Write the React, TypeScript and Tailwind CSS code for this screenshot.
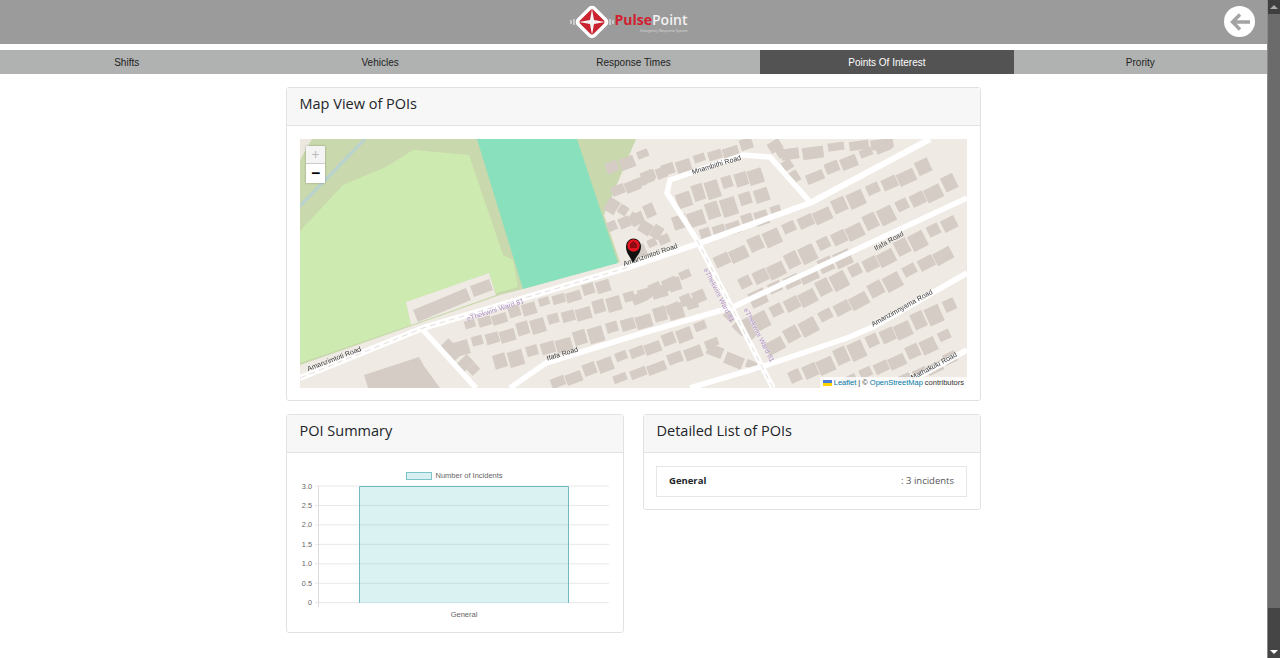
const tabs = ["Shifts", "Vehicles", "Response Times", "Points Of Interest", "Prority"];

// [x1, y1, x2, y2, count, depth] rows of houses, in page coordinates
const houseRows: number[][] = [
  [470, 326, 618, 281, 10, 10], [462, 347, 690, 281, 15, 12], [500, 362, 708, 301, 13, 13],
  [448, 345, 482, 380, 4, 13], [558, 382, 716, 322, 10, 11], [620, 380, 730, 338, 6, 10],
  [612, 205, 668, 240, 5, 12], [612, 168, 658, 150, 3, 10], [640, 180, 672, 168, 3, 9],
  [618, 190, 662, 172, 3, 11], [612, 228, 662, 206, 4, 12], [640, 250, 676, 234, 3, 10],
  [668, 170, 762, 140, 6, 10], [684, 198, 770, 170, 6, 15], [680, 222, 778, 190, 6, 15], [705, 235, 790, 208, 6, 12],
  [775, 145, 800, 185, 4, 11], [790, 155, 905, 139, 5, 10], [815, 175, 900, 141, 5, 10],
  [722, 260, 940, 160, 13, 13], [745, 284, 965, 176, 14, 14], [758, 297, 860, 250, 6, 13],
  [745, 328, 965, 216, 14, 14], [775, 344, 960, 245, 11, 13], [730, 316, 760, 345, 3, 10],
  [795, 378, 965, 300, 11, 15], [850, 382, 960, 330, 7, 12], [715, 352, 772, 375, 3, 10],
  [640, 296, 700, 270, 4, 10], [660, 312, 712, 290, 4, 10], [905, 380, 965, 352, 4, 10],
];

const roads = [
  "M300 378L423 328L629 267L700 243L810 203L930 139",
  "M697 240L667 193L670 180L743 155L770 157L810 202",
  "M697 240L773 388",
  "M967 198L733 307L646 332L546 363L510 388",
  "M967 273L873 327L847 338L767 365L690 388",
  "M967 350L907 383L895 388",
  "M423 330L476 388",
];

const labels: [string, number, number, number, string][] = [
  ["Amanzimtoti Road", 335, 361, -21, "#333"], ["Amanzimtoti Road", 651, 257, -19, "#333"],
  ["Mnambithi Road", 717, 167, -17, "#333"], ["Ifafa Road", 890, 243, -29, "#333"],
  ["Ifafa Road", 563, 356, -17, "#333"], ["Amanzimnyama Road", 903, 310, -29, "#333"],
  ["Mathakulu Road", 935, 368, -28, "#333"], ["eThekwini Ward 81", 496, 312, -18, "#a98bbf"],
  ["eThekwini Ward 81", 717, 296, 63, "#a98bbf"], ["eThekwini Ward 81", 757, 336, 63, "#a98bbf"],
];

function Houses() {
  const out: React.ReactElement[] = [];
  houseRows.forEach((r, ri) => {
    const [x1, y1, x2, y2, n, d] = r;
    const angle = (Math.atan2(y2 - y1, x2 - x1) * 180) / Math.PI;
    const step = Math.hypot(x2 - x1, y2 - y1) / n;
    for (let i = 0; i < n; i++) {
      const t = i / n;
      const seed = (i * 7 + ri * 13) % 5;
      const w = step * (0.7 + seed * 0.07);
      const h = d * (0.8 + ((seed * 3) % 5) * 0.1);
      const cx = x1 + (x2 - x1) * t;
      const cy = y1 + (y2 - y1) * t + (seed - 2);
      out.push(
        <rect key={`${ri}-${i}`} x={-w / 2} y={-h / 2} width={w} height={h} fill="#d5ccc5" transform={`translate(${cx} ${cy}) rotate(${angle})`} />
      );
    }
  });
  return <g>{out}</g>;
}

function MapDrawing() {
  return (
    <svg viewBox="300 139 667 249" className="block h-full w-full blur-[0.4px]">
      <rect x="300" y="139" width="667" height="249" fill="#efebe4" />
      <path d="M300 139H636L604 215L620 262L523 289L500 295L300 365Z" fill="#c9d8ad" />
      <path d="M300 139H312L300 160Z" fill="#ece8e0" />
      <path d="M300 206L365 139" stroke="#b8d2cf" strokeWidth="3" fill="none" />
      <path d="M299 232L343 185L386 167L413 150L469 155L503 255L513 260L518 287L496 293L489 273L406 302L411 325L300 363Z" fill="#cdebb0" />
      <path d="M489 273L406 302L411 325L496 295Z" fill="#efebe4" />
      <path d="M477 139H577L618 263L523 289Z" fill="#88e0bc" />
      <Houses />
      <path d="M413 310L466 288L471 300L418 322Z" fill="#d5ccc5" />
      <path d="M470 286L489 279L493 290L474 297Z" fill="#d5ccc5" />
      <path d="M364 375L419 357L424 366L440 388H368Z" fill="#d5ccc5" />
      {roads.map((d, i) => (
        <path key={i} d={d} fill="none" stroke="#ffffff" strokeWidth={i === 0 ? 6 : 5.5} strokeLinejoin="round" />
      ))}
      <path d={roads[0].split("L").slice(0, 3).join("L")} fill="none" stroke="#e3dfdc" strokeWidth="1" strokeDasharray="6 4" />
      <path d="M697 240L773 388" fill="none" stroke="#e3dfdc" strokeWidth="1" strokeDasharray="6 4" />
      {labels.map(([t, x, y, r, c], i) => (
        <text key={i} x={x} y={y} transform={`rotate(${r} ${x} ${y})`} textAnchor="middle" fontSize="7" fill={c} stroke="#fff" strokeWidth="0.3" paintOrder="stroke" fontFamily="'Liberation Sans', sans-serif">
          {t}
        </text>
      ))}
      <path d="M633 263C630 256 626 254 626 246A7.5 7.5 0 0 1 641 246C641 254 636 256 633 263Z" fill="#111" />
      <circle cx="633.5" cy="245.5" r="6.2" fill="#e3141f" />
      <path d="M630 248V244L633.5 241L637 244V248Z" fill="#8c0a12" />
    </svg>
  );
}

function Chart() {
  const ticks = ["3.0", "2.5", "2.0", "1.5", "1.0", "0.5", "0"];
  return (
    <svg viewBox="287 453 336 179" className="block h-[179px] w-full" fontFamily="'Liberation Sans', sans-serif">
      <rect x="406.5" y="472.5" width="25" height="7" fill="#d8f0f1" stroke="#7cc4c8" />
      <text x="435.5" y="478" fontSize="7.5" fill="#666">Number of Incidents</text>
      {ticks.map((t, i) => {
        const y = 486 + i * 19.45;
        return (
          <g key={t}>
            <line x1="315" x2="609" y1={y} y2={y} stroke="#e8e8e8" />
            <text x="312" y={y + 2.5} textAnchor="end" fontSize="7.3" fill="#666">{t}</text>
          </g>
        );
      })}
      <line x1="318.5" x2="318.5" y1="486" y2="607" stroke="#dcdcdc" />
      <rect x="359.5" y="486.5" width="209" height="116.5" fill="#4bc0c0" fillOpacity="0.2" />
      <path d="M359.5 603V486.5H568.5V603" fill="none" stroke="#6fb9bf" />
      <text x="464" y="616.5" textAnchor="middle" fontSize="7.5" fill="#666">General</text>
    </svg>
  );
}

function Card({ title, children, className }: { title: string; children: React.ReactNode; className?: string }) {
  return (
    <div className={`rounded-[3px] border border-[#e2e2e2] bg-white ${className ?? ""}`}>
      <div className="flex h-[38px] items-center border-b border-[#e2e2e2] bg-[#f7f7f7] pb-[5px] pl-[12.5px] pr-[13px]">
        <h2 className="text-[14.5px] font-medium text-[#212529]">{title}</h2>
      </div>
      {children}
    </div>
  );
}

function Logo() {
  return (
    <div className="mr-[10px] flex items-center">
      <svg width="44" height="40" viewBox="0 0 44 40" className="mr-[1px]">
        <path d="M1 18v4M4 17v6M40 17v6M43 18v4" stroke="#e8e8e8" strokeWidth="1.2" />
        <rect x="9" y="7" width="26" height="26" rx="5" transform="rotate(45 22 20)" fill="#ffffff" />
        <rect x="12.5" y="10.5" width="19" height="19" rx="2" transform="rotate(45 22 20)" fill="#c9242f" />
        <path d="M22 7L24 18L35 20L24 22L22 33L20 22L9 20L20 18Z" fill="#f4f4f4" />
      </svg>
      <div className="flex flex-col items-end">
        <div className="text-[14px] leading-[16px]">
          <span className="font-bold text-[#d2202f]">Pulse</span>
          <span className="font-semibold text-[#f2f2f2]">Point</span>
        </div>
        <span className="mt-[1px] text-[3.5px] leading-[4px] text-[#dddddd]">Emergency Response System</span>
      </div>
    </div>
  );
}

export default function App() {
  return (
    <div className="flex h-[658px] overflow-hidden bg-white font-['Open_Sans',sans-serif]">
      <div className="flex min-w-0 flex-1 flex-col">
        <header className="relative flex h-[44px] items-center justify-center bg-[#9b9b9b]">
          <Logo />
          <div className="absolute right-[12px] top-[6px] flex h-[31px] w-[31px] items-center justify-center rounded-full bg-white">
            <svg width="22" height="20" viewBox="0 0 22 20" fill="none" stroke="#a3a3a3" strokeWidth="3.4">
              <path d="M21 10H4M11 2.5L3.5 10L11 17.5" />
            </svg>
          </div>
        </header>
        <nav className="mt-[6px] grid h-[24px] grid-cols-5 bg-[#b0b2b1] font-['Liberation_Sans',sans-serif] text-[10px]">
          {tabs.map((t) => (
            <div key={t} className={t === "Points Of Interest" ? "flex items-center justify-center bg-[#535353] text-white" : "flex items-center justify-center text-[#222]"}>
              {t}
            </div>
          ))}
        </nav>
        <main className="mx-auto mt-[13px] flex w-[695px] flex-col gap-[13px]">
          <Card title="Map View of POIs">
            <div className="px-[13px] pb-[12px] pt-[13px]">
              <div className="relative h-[249px] overflow-hidden">
                <MapDrawing />
                <div className="absolute left-[6px] top-[7px] flex w-[19px] flex-col bg-white text-center shadow-[0_0_2px_rgba(0,0,0,0.3)]">
                  <span className="h-[18px] border-b border-[#ccc] bg-[#f4f4f4] text-[14px] leading-[18px] text-[#bbb]">+</span>
                  <span className="h-[19px] text-[16px] font-bold leading-[18px] text-black">−</span>
                </div>
                <div className="absolute bottom-0 right-0 flex h-[11px] items-center gap-[2px] bg-white/80 pl-[3px] pr-[3px] font-['Liberation_Sans',sans-serif] text-[7.5px] text-[#333]">
                  <span className="flex h-[6px] w-[9px] flex-col">
                    <span className="h-[3px] bg-[#4c7be0]" />
                    <span className="h-[3px] bg-[#ffd500]" />
                  </span>
                  <span className="text-[#0078a8]">Leaflet</span>
                  <span>| ©</span>
                  <span className="text-[#0078a8]">OpenStreetMap</span>
                  <span>contributors</span>
                </div>
              </div>
            </div>
          </Card>
          <div className="grid grid-cols-[338px_338px] gap-[19px]">
            <Card title="POI Summary">
              <Chart />
            </Card>
            <Card title="Detailed List of POIs" className="self-start">
              <div className="pb-[12px] pl-[12px] pr-[13px] pt-[13px]">
                <div className="flex h-[31px] items-center justify-between border border-[#e6e6e6] px-[12px] text-[9.5px] text-[#212529]">
                  <span className="font-bold">General</span>
                  <span className="text-[#555]">: 3 incidents</span>
                </div>
              </div>
            </Card>
          </div>
        </main>
      </div>
      <div className="flex w-[13px] flex-col border-l border-[#8a8a8a] bg-[#454545]">
        <div className="flex h-[14px] items-center justify-center bg-[#3f3f3f]">
          <span className="h-0 w-0 border-x-[4px] border-b-[4px] border-x-transparent border-b-[#aaa]" />
        </div>
        <div className="h-[594px] bg-[#6b6b6b]" />
        <div className="flex flex-1 items-end justify-center pb-[4px]">
          <span className="h-0 w-0 border-x-[4px] border-t-[4px] border-x-transparent border-t-white" />
        </div>
      </div>
    </div>
  );
}
